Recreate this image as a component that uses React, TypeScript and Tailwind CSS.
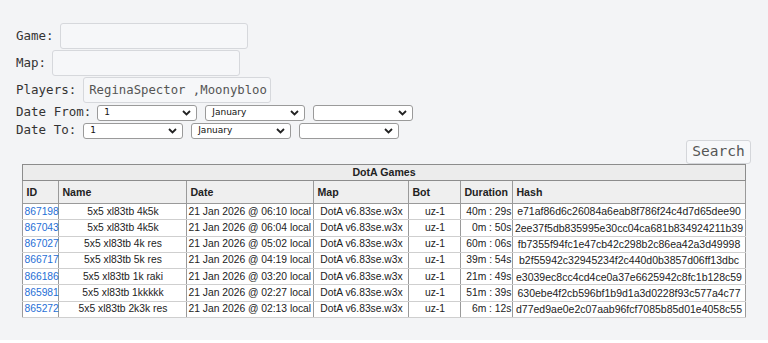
import React from "react";

const rows = [
  ["867198", "5x5 xl83tb 4k5k", "21 Jan 2026 @ 06:10 local", "40m : 29s", "e71af86d6c26084a6eab8f786f24c4d7d65dee90"],
  ["867043", "5x5 xl83tb 4k5k", "21 Jan 2026 @ 06:04 local", "0m : 50s", "2ee37f5db835995e30cc04ca681b834924211b39"],
  ["867027", "5x5 xl83tb 4k res", "21 Jan 2026 @ 05:02 local", "60m : 06s", "fb7355f94fc1e47cb42c298b2c86ea42a3d49998"],
  ["866717", "5x5 xl83tb 5k res", "21 Jan 2026 @ 04:19 local", "39m : 54s", "b2f55942c32945234f2c440d0b3857d06ff13dbc"],
  ["866186", "5x5 xl83tb 1k raki", "21 Jan 2026 @ 03:20 local", "21m : 49s", "e3039ec8cc4cd4ce0a37e6625942c8fc1b128c59"],
  ["865981", "5x5 xl83tb 1kkkkk", "21 Jan 2026 @ 02:27 local", "51m : 39s", "630ebe4f2cb596bf1b9d1a3d0228f93c577a4c77"],
  ["865272", "5x5 xl83tb 2k3k res", "21 Jan 2026 @ 02:13 local", "6m : 12s", "d77ed9ae0e2c07aab96fcf7085b85d01e4058c55"],
];

function Chevron() {
  return (
    <svg width="9" height="6" viewBox="0 0 9 6" className="shrink-0">
      <path d="M1 1 L4.5 4.5 L8 1" fill="none" stroke="#222" strokeWidth="1.8" />
    </svg>
  );
}

function Sel({ value }: { value: string }) {
  return (
    <div className="flex h-[16px] w-[100px] items-center justify-between rounded-[3px] border border-[#9a9a9a] bg-white pl-[6px] pr-[5px] text-[9px] text-[#111]" style={{ fontFamily: "'DejaVu Sans', sans-serif" }}>
      <span className="leading-none">{value}</span>
      <Chevron />
    </div>
  );
}

function TextInput({ value }: { value?: string }) {
  return (
    <div className="flex h-[26px] w-[188px] shrink-0 items-center overflow-hidden whitespace-nowrap rounded-[3px] border border-[#d6d8dc] bg-[#f6f7f9] pl-[5px] text-[12.3px] text-[#555]">
      {value}
    </div>
  );
}

export default function App() {
  const mono = { fontFamily: "'DejaVu Sans Mono', monospace" };
  const sans = { fontFamily: "'Liberation Sans', Arial, sans-serif" };
  const cell = "border-y border-y-[#cfcfcf] border-x border-x-[#9a9a9a] px-[1px] py-0 leading-none whitespace-nowrap";
  return (
    <div className="h-[343px] w-[768px] bg-white">
      <div className="h-[340px] w-full bg-[#f3f4f6] pt-[23px]" style={mono}>
        <div className="flex flex-col gap-[1px] pl-[16px] text-[12.5px] text-[#333]">
          <div className="flex items-center gap-[6.5px]">
            <span>Game:</span>
            <TextInput />
          </div>
          <div className="flex items-center gap-[6px]">
            <span>Map:</span>
            <TextInput />
          </div>
          <div className="flex items-center gap-[7px]">
            <span>Players:</span>
            <TextInput value="ReginaSpector ,Moonybloo" />
          </div>
          <div className="flex h-[17px] items-center gap-[6px]">
            <span>Date From:</span>
            <div className="flex gap-[8px]">
              <Sel value="1" />
              <Sel value="January" />
              <Sel value="" />
            </div>
          </div>
          <div className="flex h-[17px] items-center gap-[7px]">
            <span>Date To:</span>
            <div className="flex gap-[8px]">
              <Sel value="1" />
              <Sel value="January" />
              <Sel value="" />
            </div>
          </div>
        </div>
        <div className="mt-[1px] flex justify-end pr-[17px]">
          <div className="flex h-[24px] w-[65px] items-center justify-center rounded-[3px] border border-[#d4d6da] bg-[#f7f8fa] text-[14.5px] text-[#555]">
            Search
          </div>
        </div>
        <div className="flex justify-center">
          <table className="w-[722px] table-fixed border-collapse border border-[#8c8c8c] text-[10.3px] text-[#222]" style={sans}>
            <colgroup>
              <col className="w-[36px]" />
              <col className="w-[128px]" />
              <col className="w-[127px]" />
              <col className="w-[95px]" />
              <col className="w-[52px]" />
              <col className="w-[52px]" />
              <col className="w-[232px]" />
            </colgroup>
            <tbody>
              <tr className="h-[16px] bg-[#ececec]">
                <td colSpan={7} className="border border-[#8c8c8c] p-0 text-center text-[10.6px] font-bold leading-none">DotA Games</td>
              </tr>
              <tr className="h-[23px] bg-[#efefef] font-bold">
                {["ID", "Name", "Date", "Map", "Bot", "Duration", "Hash"].map((h) => (
                  <td key={h} className="border border-[#9a9a9a] px-[3px] py-0 text-left text-[10.6px] leading-none">{h}</td>
                ))}
              </tr>
              {rows.map((r) => (
                <tr key={r[0]} className="h-[16.3px] bg-white">
                  <td className={cell}>
                    <a className="text-[#1f6fd6]">{r[0]}</a>
                  </td>
                  <td className={`${cell} text-center`}>{r[1]}</td>
                  <td className={`${cell} text-left`}>{r[2]}</td>
                  <td className={`${cell} text-center`}>DotA v6.83se.w3x</td>
                  <td className={`${cell} text-center`}>uz-1</td>
                  <td className={`${cell} text-right`}>{r[3]}</td>
                  <td className={`${cell} text-center text-[10.5px]`}>{r[4]}</td>
                </tr>
              ))}
            </tbody>
          </table>
        </div>
      </div>
    </div>
  );
}
